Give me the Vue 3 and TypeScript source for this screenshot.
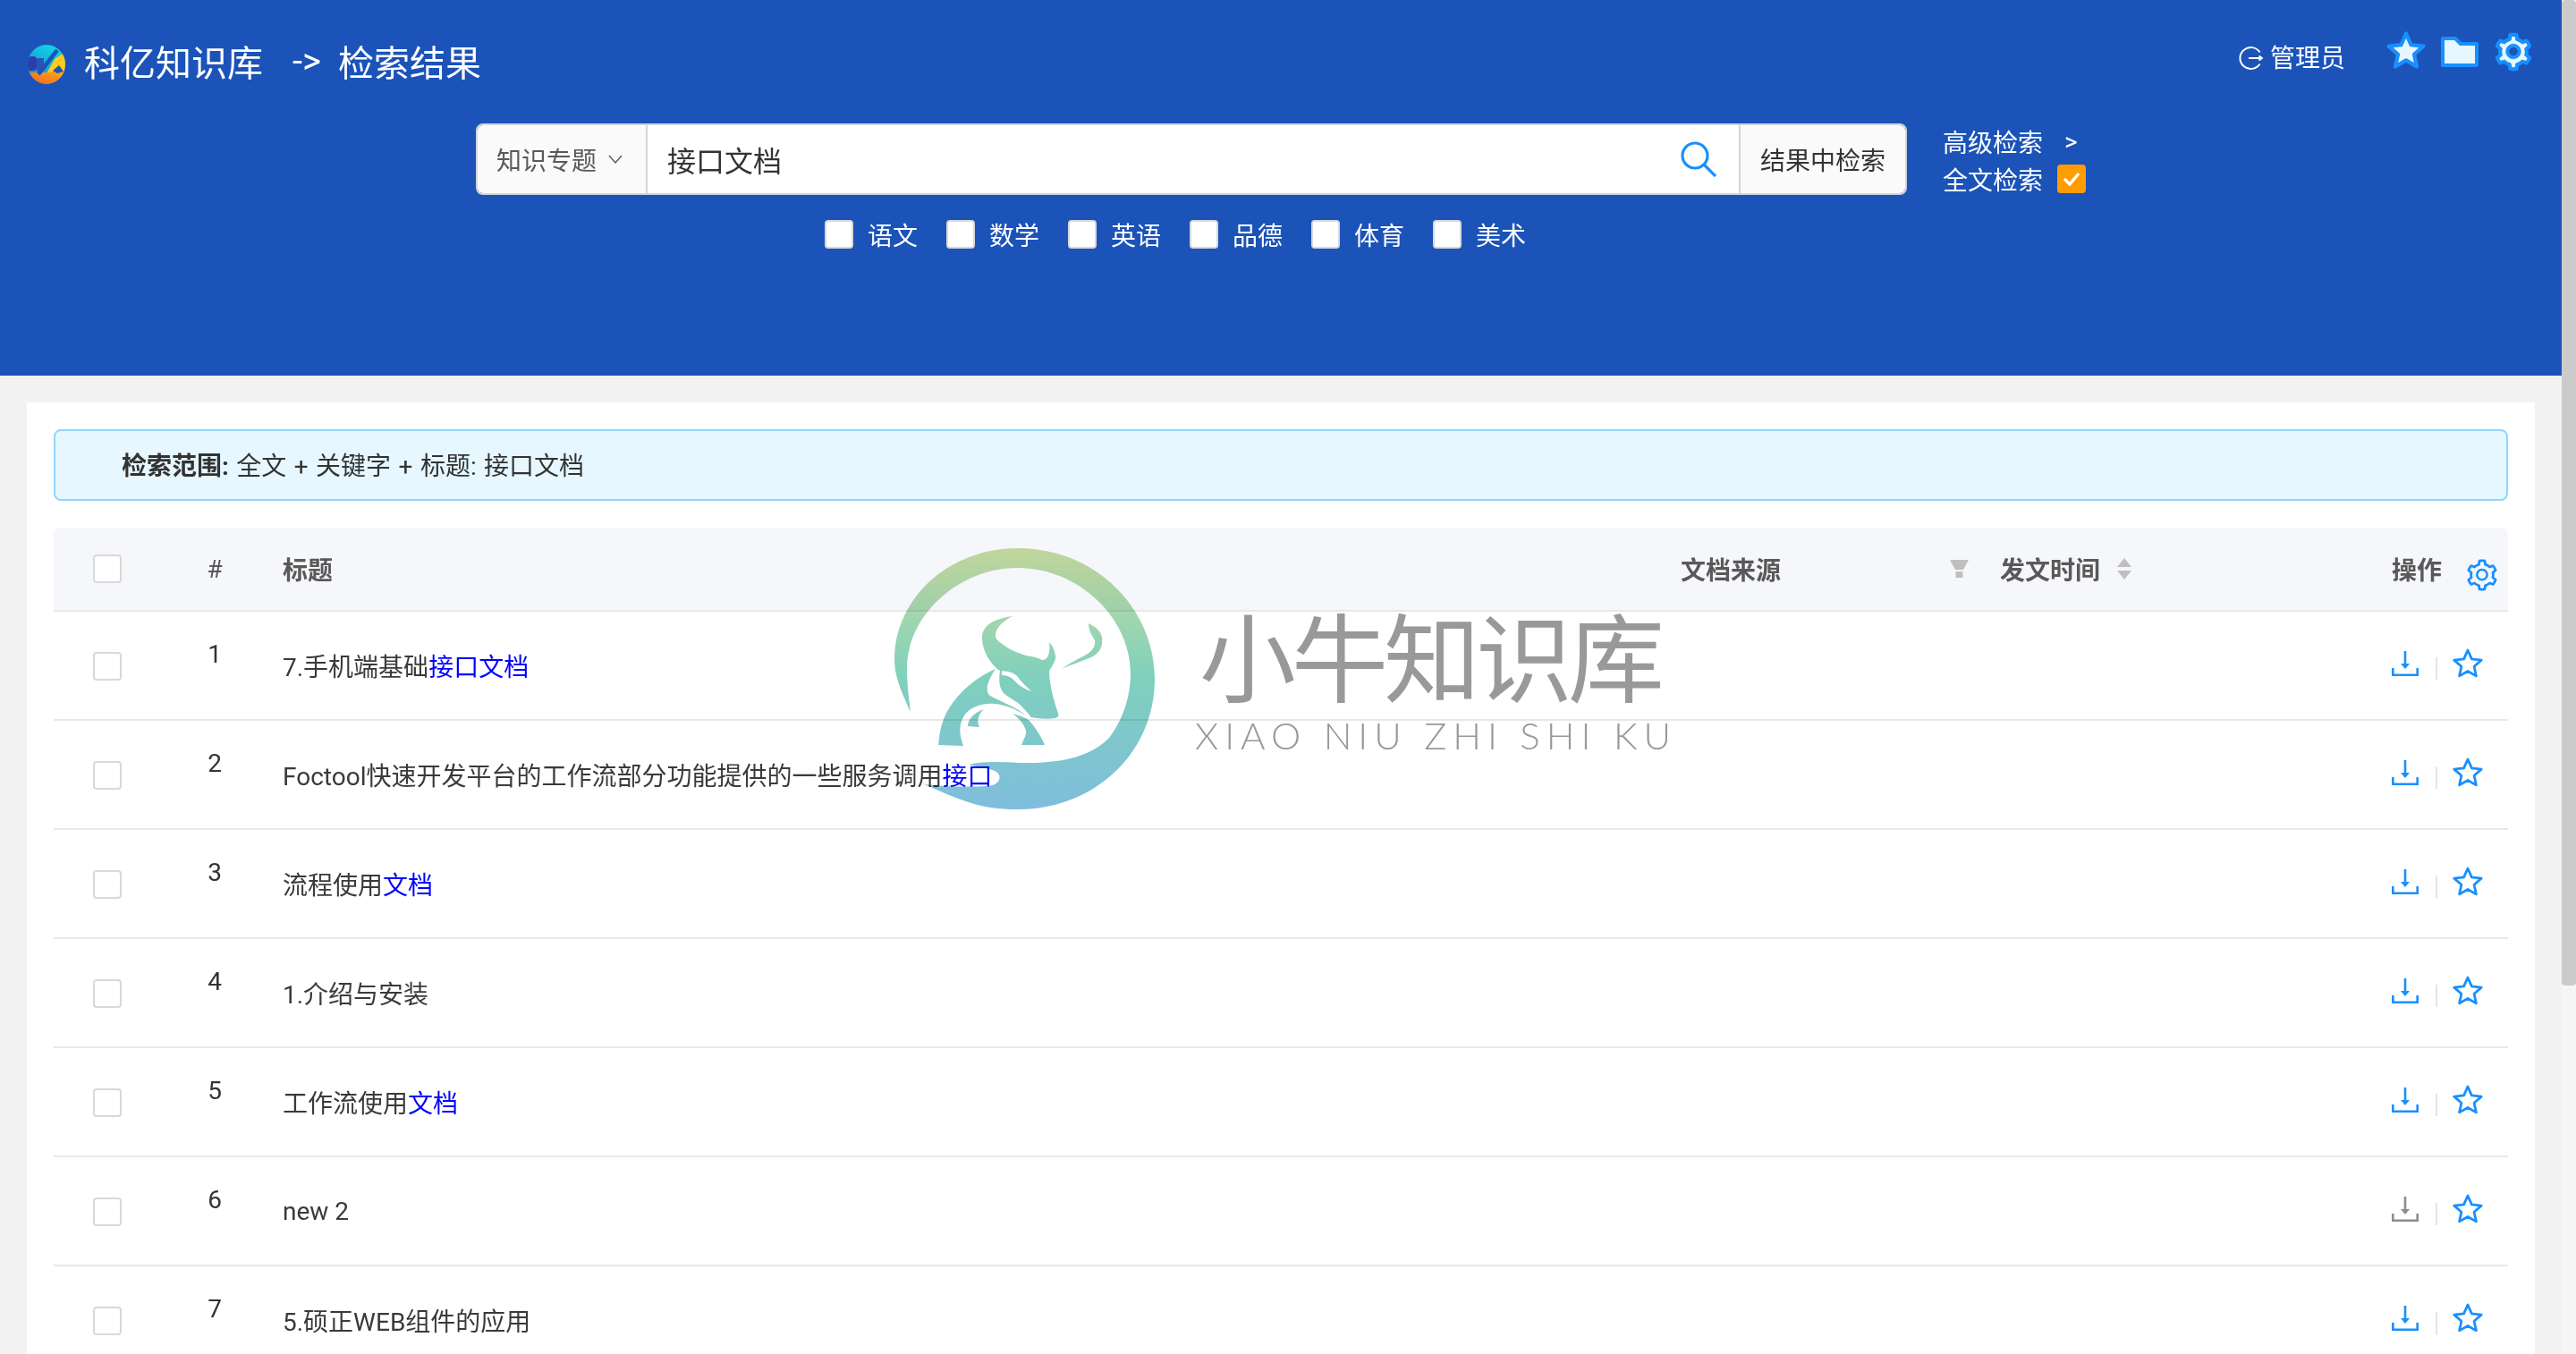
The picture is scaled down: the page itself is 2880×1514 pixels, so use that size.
<template>
  <div class="page">
    <div class="main">
      <header class="top">
        <div class="top-bar">
          <div class="brand">
            <svg class="logo" viewBox="0 0 42 44">
              <defs>
                <linearGradient id="logoTop" x1="0.7" y1="0" x2="0.2" y2="1">
                  <stop offset="0" stop-color="#12d6e8" />
                  <stop offset="1" stop-color="#1f7fd4" />
                </linearGradient>
                <linearGradient id="logoLow" x1="1" y1="0" x2="0" y2="1">
                  <stop offset="0" stop-color="#ffb01a" />
                  <stop offset="1" stop-color="#f4601c" />
                </linearGradient>
                <clipPath id="logoClip"><ellipse cx="21" cy="22" rx="21" ry="22" /></clipPath>
              </defs>
              <g clip-path="url(#logoClip)">
                <rect width="42" height="44" fill="url(#logoTop)" />
                <polygon points="42,8 42,30 20,34 30,16" fill="#ffcb1c" />
                <polygon points="0,31 20,31 42,28 42,44 0,44" fill="url(#logoLow)" />
                <rect x="0" y="13" width="10" height="16" rx="4" fill="#2c3fa8" />
                <rect x="10" y="15" width="8" height="14" fill="#2a55b8" />
                <path d="M33 6 L12 33" stroke="#1b53b8" stroke-width="4.5" fill="none" />
                <path d="M28 29 L35 23 L40 30 L33 32 Z" fill="#1b53b8" />
              </g>
            </svg>
            <span class="brand-name">科亿知识库</span>
            <span class="brand-arrow">-&gt;</span>
            <span class="brand-page">检索结果</span>
          </div>
          <div class="tools">
            <svg class="login" viewBox="0 0 27 26" fill="none" stroke="#fff" stroke-width="2">
              <path d="M23.5 6.5A12 12 0 1 0 23.5 19.5" />
              <path d="M11 13H26" />
              <path d="M22.5 10.5L26 13L22.5 15.500" />
            </svg>
            <span class="user">管理员</span>
            <svg class="tool-star" viewBox="0 0 34 33">
              <polygon :points="starPoints" fill="#e6f7ff" stroke="#1890ff" stroke-width="3.4" stroke-linejoin="round" />
            </svg>
            <svg class="tool-folder" viewBox="0 0 42 34">
              <path d="M2 2H16L22 8H40V32H2Z" fill="#e6f7ff" stroke="#1890ff" stroke-width="4" stroke-linejoin="round" />
            </svg>
            <svg class="tool-gear" viewBox="0 0 1024 1024">
              <path :d="gearInner" fill="#e6f7ff" />
              <circle cx="512" cy="502" r="112" fill="#1b53b8" />
              <path :d="gearPath" fill="#1890ff" stroke="#1890ff" stroke-width="16" />
            </svg>
          </div>
        </div>

        <div class="search-row">
          <div class="search-box">
            <div class="search-select">
              <span>知识专题</span>
              <svg class="chevron" viewBox="0 0 16 10" fill="none" stroke="#595959" stroke-width="1.4">
                <path d="M1 1L8 9L15 1" />
              </svg>
            </div>
            <div class="search-input">
              <span>接口文档</span>
              <svg class="search-icon" viewBox="0 0 40 40" fill="none" stroke="#1890ff" stroke-width="3.2">
                <circle cx="16" cy="16" r="14" />
                <path d="M26 26L39 39" />
              </svg>
            </div>
            <div class="search-after">结果中检索</div>
          </div>
          <div class="search-side">
            <div class="side-line">
              <span>高级检索</span>
              <span class="side-gt">&gt;</span>
            </div>
            <div class="side-line">
              <span>全文检索</span>
              <span class="side-check">
                <svg viewBox="0 0 20 16" fill="none" stroke="#fff" stroke-width="3.400">
                  <path d="M2 8L8 14L18 2" />
                </svg>
              </span>
            </div>
          </div>
        </div>

        <div class="subjects">
          <label v-for="s in subjects" :key="s" class="subject">
            <span class="subject-box"></span>
            <span>{{ s }}</span>
          </label>
        </div>
      </header>

      <section class="card">
        <div class="alert"><b>检索范围:</b> 全文 + 关键字 + 标题: 接口文档</div>

        <div class="table">
          <div class="tr th">
            <div class="td"><span class="check"></span></div>
            <div class="td td-num">#</div>
            <div class="td">标题</div>
            <div class="td td-source">
              <span>文档来源</span>
              <svg class="filter" viewBox="0 0 21 20" fill="#bfbfbf">
                <polygon points="0,0 21,0 15,11 6,11" />
                <rect x="6.500" y="13" width="8" height="7" />
              </svg>
            </div>
            <div class="td td-time">
              <span>发文时间</span>
              <svg class="sort" viewBox="0 0 16 24" fill="#bfbfbf">
                <polygon points="8,0 16,10 0,10" />
                <polygon points="0,14 16,14 8,24" />
              </svg>
            </div>
            <div class="td td-head-ops">
              <span>操作</span>
              <svg class="table-gear" viewBox="0 0 1024 1024">
                <path :d="gearPath" fill="#1890ff" />
              </svg>
            </div>
          </div>

          <div v-for="(row, i) in rows" :key="i" class="tr">
            <div class="td td-check"><span class="check"></span></div>
            <div class="td td-num td-index">{{ i + 1 }}</div>
            <div class="td td-title">{{ row.text }}<span class="hit">{{ row.hit }}</span></div>
            <div class="td"></div>
            <div class="td"></div>
            <div class="td td-ops">
              <svg class="download" :class="{ 'download-off': row.off }" viewBox="0 0 30 28">
                <rect x="13.700" y="0" width="2.600" height="15" />
                <polygon points="10,14 20,14 15,20" />
                <path d="M1.300 19V26.700H28.700V19" fill="none" stroke-width="2.600" />
              </svg>
              <span class="ops-sep"></span>
              <svg class="star" viewBox="0 0 34 33">
                <polygon :points="starPoints" fill="none" stroke="#1890ff" stroke-width="2.800" stroke-linejoin="round" />
              </svg>
            </div>
          </div>
        </div>
      </section>
    </div>

    <aside class="scrollbar"><div class="scrollbar-thumb"></div></aside>

    <!-- 水印 -->
    <div class="watermark">
      <svg class="wm-logo" viewBox="1000 613 292 293">
        <defs>
          <linearGradient id="wmGrad" gradientUnits="userSpaceOnUse" x1="0" y1="613" x2="0" y2="905">
            <stop offset="0" stop-color="#c8dd9e" />
            <stop offset="0.5" stop-color="#7fd0bd" />
            <stop offset="1" stop-color="#7fbddd" />
          </linearGradient>
        </defs>
        <g fill="url(#wmGrad)">
          <path d="M1018 796C1006 770 1000 755 1000 737C1000 670 1060 613 1138 613C1225 613 1291 680 1291 760C1291 840 1225 905 1138 905C1095 905 1075 895 1033 877C1060 880 1085 880 1105 879C1116 878 1120 870 1116 865C1112 860 1105 860 1083 855C1100 851 1120 852 1140 853C1190 854 1220 845 1240 825C1255 805 1264 780 1264 753C1264 690 1205 635 1138 635C1070 635 1014 690 1014 747C1014 765 1016 780 1018 796Z" />
          <path d="M1132 689C1110 692 1098 700 1098 713C1098 730 1110 745 1118 750C1117 758 1116 768 1122 775C1128 780 1132 782 1137 785C1143 790 1148 796 1153 802C1162 804 1172 804 1180 803C1183 802 1184 800 1183 798C1178 782 1173 766 1173 750C1178 742 1181 738 1180 733C1179 727 1177 722 1173 718C1174 725 1173 730 1172 733C1170 737 1168 738 1165 738C1160 735 1153 734 1147 733C1138 730 1130 727 1123 722C1118 718 1114 716 1113 712C1112 705 1118 696 1132 689Z" />
          <path d="M1113 748C1085 760 1060 785 1053 810C1050 820 1050 828 1049 833L1077 834C1072 820 1072 810 1078 800C1085 790 1100 786 1112 787C1125 788 1135 793 1147 800C1135 790 1120 785 1107 778C1100 772 1105 760 1113 748Z" />
          <path d="M1217 697C1227 702 1234 708 1232 720C1231 727 1226 732 1220 735C1208 740 1195 744 1187 748C1195 742 1207 736 1216 731C1222 727 1225 722 1224 716C1222 712 1217 707 1217 697Z" />
          <path d="M1100 793C1088 797 1082 805 1082 812L1095 813C1092 806 1093 800 1100 793Z" />
          <path d="M1132 798C1140 800 1146 802 1150 805C1156 811 1160 818 1163 823C1165 827 1167 830 1168 833L1142 833C1144 827 1148 822 1147 817C1146 812 1140 803 1132 798Z" />
        </g>
        <path d="M1120 750C1128 751 1134 752 1138 757C1143 764 1149 769 1153 773C1147 771 1140 767 1136 763C1131 757 1126 755 1120 755Z" fill="#fff" />
      </svg>
      <div class="wm-text">
        <div class="wm-cn">小牛知识库</div>
        <div class="wm-en">XIAO NIU ZHI SHI KU</div>
      </div>
    </div>
  </div>
</template>

<script setup lang="ts">
interface Row {
  text: string
  hit: string
  off?: boolean
}

const subjects: string[] = ['语文', '数学', '英语', '品德', '体育', '美术']

const rows: Row[] = [
  { text: '7.手机端基础', hit: '接口文档' },
  { text: 'Foctool快速开发平台的工作流部分功能提供的一些服务调用', hit: '接口' },
  { text: '流程使用', hit: '文档' },
  { text: '1.介绍与安装', hit: '' },
  { text: '工作流使用', hit: '文档' },
  { text: 'new 2', hit: '', off: true },
  { text: '5.硕正WEB组件的应用', hit: '' },
]

const starPoints = '17,2 21.4,11.9 32.2,13.1 24.1,20.3 26.4,30.9 17,25.5 7.6,30.9 9.9,20.3 1.8,13.1 12.6,11.9'

const gearInner =
  'M788.3 465.9c2.5 15.1 3.8 30.6 3.8 46.1s-1.3 31-3.8 46.1l-6.6 40.1 74.7 63.9a370.03 370.03 0 0 1-42.6 73.6L721 702.8l-31.4 25.8c-23.9 19.6-50.5 35-79.3 45.8l-38.1 14.3-17.9 97a377.5 377.5 0 0 1-85 0l-17.9-97.2-37.8-14.5c-28.5-10.8-55-26.2-78.7-45.7l-31.4-25.9-93.4 33.2c-17-22.9-31.2-47.6-42.6-73.6l75.5-64.5-6.5-40c-2.4-14.9-3.7-30.3-3.7-45.5 0-15.3 1.2-30.6 3.7-45.5l6.5-40-75.5-64.5c11.3-26.1 25.6-50.7 42.6-73.6l93.4 33.2 31.4-25.9c23.7-19.5 50.2-34.9 78.7-45.7l37.9-14.3 17.9-97.2c28.1-3.2 56.8-3.2 85 0l17.9 97 38.1 14.3c28.7 10.8 55.4 26.2 79.3 45.8l31.4 25.8 92.8-32.9c17 22.9 31.2 47.6 42.6 73.6L781.8 426l6.5 39.9z'

const gearPath =
  'M924.8 625.7l-65.5-56c3.1-19 4.7-38.4 4.7-57.8s-1.6-38.8-4.7-57.8l65.5-56a32.03 32.03 0 0 0 9.3-35.2l-.9-2.6a443.74 443.74 0 0 0-79.7-137.9l-1.8-2.1a32.12 32.12 0 0 0-35.1-9.5l-81.3 28.9c-30-24.6-63.5-44-99.7-57.6l-15.7-85a32.05 32.05 0 0 0-25.8-25.7l-2.7-.5c-52.1-9.4-106.9-9.4-159 0l-2.7.5a32.05 32.05 0 0 0-25.8 25.7l-15.8 85.4a351.86 351.86 0 0 0-99 57.4l-81.9-29.1a32 32 0 0 0-35.1 9.5l-1.8 2.1a446.02 446.02 0 0 0-79.7 137.9l-.9 2.6c-4.5 12.5-.8 26.5 9.3 35.2l66.3 56.6c-3.1 18.8-4.6 38-4.6 57.1 0 19.2 1.5 38.4 4.6 57.1L99 625.5a32.03 32.03 0 0 0-9.3 35.2l.9 2.6c18.1 50.4 44.9 96.9 79.7 137.9l1.8 2.1a32.12 32.12 0 0 0 35.1 9.5l81.9-29.1c29.8 24.5 63.1 43.9 99 57.4l15.8 85.4a32.05 32.05 0 0 0 25.8 25.7l2.7.5a449.4 449.4 0 0 0 159 0l2.7-.5a32.05 32.05 0 0 0 25.8-25.7l15.7-85a350 350 0 0 0 99.7-57.6l81.3 28.9a32 32 0 0 0 35.1-9.5l1.8-2.1c34.8-41.1 61.6-87.5 79.7-137.9l.9-2.6c4.5-12.3.8-26.3-9.3-35z' +
  gearInner +
  'M512 326c-97.2 0-176 78.8-176 176s78.8 176 176 176 176-78.8 176-176-78.8-176-176-176zm79.2 255.2A111.6 111.6 0 0 1 512 614c-29.9 0-58-11.7-79.2-32.8A111.6 111.6 0 0 1 400 502c0-29.9 11.7-58 32.8-79.2C454 401.6 482.1 390 512 390c29.9 0 58 11.6 79.2 32.8A111.6 111.6 0 0 1 624 502c0 29.9-11.7 58-32.8 79.2z'
</script>

<style>
html,
body {
  margin: 0;
  background: #f2f2f2;
}
</style>

<style scoped>
.page {
  position: relative;
  display: flex;
  width: 2880px;
  height: 1514px;
  overflow: hidden;
  background: #f2f2f2;
  color: #333;
  font-family: Roboto, "Noto Sans CJK SC", sans-serif;
  font-size: 28px;
}

.main {
  flex: 1;
  min-width: 0;
}

.scrollbar {
  width: 16px;
  background: #f5f5f5;
}

.scrollbar-thumb {
  height: 1102px;
  border-radius: 4px;
  background: #cbcbcb;
}

/* 顶部 */
.top {
  height: 420px;
  box-sizing: border-box;
  background: #1b53b8;
  color: #fff;
}

.top-bar {
  display: flex;
  align-items: flex-start;
  justify-content: space-between;
  height: 138px;
  box-sizing: border-box;
  padding: 35px 30px 0 31px;
}

.brand {
  display: flex;
  align-items: center;
  height: 66px;
  font-size: 40px;
}

.logo {
  width: 42px;
  height: 44px;
  margin-top: 8px;
  margin-right: 21px;
}

.brand-arrow {
  margin-left: 33px;
  margin-right: 19px;
}

.tools {
  display: flex;
  align-items: flex-start;
}

.login {
  width: 27px;
  height: 26px;
  margin-top: 17px;
  margin-right: 8px;
}

.user {
  line-height: 62px;
  margin-right: 46px;
}

.tool-star {
  width: 44px;
  height: 42px;
}

.tool-folder {
  width: 42px;
  height: 34px;
  margin-top: 6px;
  margin-left: 17px;
}

.tool-gear {
  width: 48px;
  height: 50px;
  margin-top: -2px;
  margin-left: 15px;
}

.search-row {
  display: flex;
  align-items: flex-start;
  padding-left: 532px;
}

.search-box {
  display: flex;
  width: 1600px;
  height: 80px;
  box-sizing: border-box;
  border: 2px solid #d2d4dc;
  border-radius: 8px;
  overflow: hidden;
  color: #333;
}

.search-select {
  display: flex;
  align-items: center;
  width: 190px;
  box-sizing: border-box;
  padding-left: 21px;
  background: #fafafa;
  border-right: 2px solid #d2d4dc;
  color: #595959;
}

.chevron {
  width: 16px;
  height: 10px;
  margin-left: 13px;
}

.search-input {
  flex: 1;
  display: flex;
  align-items: center;
  justify-content: space-between;
  padding: 0 25px 0 22px;
  background: #fff;
  font-size: 32px;
}

.search-icon {
  width: 40px;
  height: 40px;
}

.search-after {
  display: flex;
  align-items: center;
  justify-content: center;
  width: 184px;
  background: #fafafa;
  border-left: 2px solid #d2d4dc;
}

.search-side {
  margin-top: -1px;
  margin-left: 40px;
}

.side-line {
  display: flex;
  align-items: center;
  height: 42px;
}

.side-gt {
  margin-left: 24px;
  font-size: 28px;
}

.side-check {
  display: flex;
  align-items: center;
  justify-content: center;
  width: 32px;
  height: 32px;
  margin-left: 16px;
  border-radius: 4px;
  background: #ff9c00;
}

.side-check svg {
  width: 20px;
  height: 16px;
}

.subjects {
  display: flex;
  gap: 32px;
  padding: 24px 0 0 922px;
}

.subject {
  display: flex;
  align-items: center;
  gap: 16px;
  height: 34px;
}

.subject-box {
  width: 32px;
  height: 32px;
  box-sizing: border-box;
  border: 2px solid #d9d9d9;
  border-radius: 4px;
  background: #fff;
}

/* 内容 */
.card {
  margin: 30px 30px 0;
  padding: 30px;
  background: #fff;
}

.alert {
  height: 80px;
  box-sizing: border-box;
  padding-left: 74px;
  border: 2px solid #91d5ff;
  border-radius: 8px;
  background: #e6f7ff;
  line-height: 80px;
  word-spacing: 1.500px;
}

.alert b {
  font-weight: 700;
}

.table {
  margin-top: 30px;
}

.tr {
  display: grid;
  grid-template-columns: 172px 84px 1563px 357px 438px 130px;
  height: 122px;
  box-sizing: border-box;
  border-bottom: 2px solid #e8e8e8;
}

.th {
  height: 94px;
  border-radius: 8px 8px 0 0;
  background: #f6f7fb;
  color: #595959;
  font-weight: 700;
}

.td {
  display: flex;
  align-items: center;
  min-width: 0;
}

.td-check {
  padding-top: 2px;
}

.check {
  width: 32px;
  height: 32px;
  box-sizing: border-box;
  margin-left: 44px;
  border: 2px solid #d9d9d9;
  border-radius: 4px;
  background: #fff;
}

.td-num {
  justify-content: center;
  padding-right: 68px;
}

.th .td-num {
  font-weight: 400;
}

.td-index {
  padding-bottom: 26px;
}

.td-title {
  white-space: pre;
  color: #3a3a3a;
}

.hit {
  color: #0000ff;
}

.td-source {
  justify-content: space-between;
  padding-right: 35px;
}

.filter {
  width: 21px;
  height: 20px;
}

.sort {
  width: 16px;
  height: 24px;
  margin-left: 19px;
}

.table-gear {
  width: 40px;
  height: 40px;
  margin-top: 14px;
  margin-left: 25px;
}

.td-ops {
  align-items: flex-start;
  padding-top: 41px;
}

.download {
  width: 30px;
  height: 28px;
  margin-top: 3px;
  fill: #1890ff;
  stroke: #1890ff;
  stroke-width: 0;
}

.download-off {
  fill: #8c8c94;
  stroke: #8c8c94;
}

.ops-sep {
  width: 2px;
  height: 25px;
  margin: 10px 17px 0 19px;
  background: #e4e4e4;
}

.star {
  width: 34px;
  height: 33px;
}

/* 水印 */
.watermark {
  position: absolute;
  left: 1000px;
  top: 613px;
  display: flex;
  pointer-events: none;
  mix-blend-mode: multiply;
}

.wm-logo {
  width: 292px;
  height: 293px;
}

.wm-text {
  margin: 54px 0 0 37px;
  white-space: nowrap;
}

.wm-cn {
  height: 126px;
  padding-left: 12px;
  font-family: "Noto Sans CJK SC", sans-serif;
  font-size: 108px;
  font-weight: 400;
  line-height: 126px;
  letter-spacing: -5px;
  color: #999;
}

.wm-en {
  margin-top: 7px;
  margin-left: 7px;
  font-family: Lato, sans-serif;
  font-size: 42px;
  font-weight: 300;
  line-height: 44px;
  letter-spacing: 7px;
  color: #999;
}
</style>
